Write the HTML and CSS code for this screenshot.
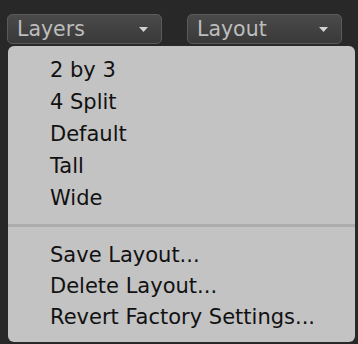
FILE: index.html
```html
<!DOCTYPE html>
<html lang="en">
  <head>
    <meta charset="UTF-8" />
    <meta name="viewport" content="width=device-width, initial-scale=1.0" />
    <title>Layout Menu</title>
    <link rel="stylesheet" href="styles.css">
  </head>
  <body>
    <div class="toolbar">
      <button class="drop">
        <span>Layers</span>
        <svg class="arrow" width="9" height="5" viewBox="0 0 9 5"><polygon points="0,0 9,0 4.5,5" /></svg>
      </button>
      <button class="drop">
        <span>Layout</span>
        <svg class="arrow" width="9" height="5" viewBox="0 0 9 5"><polygon points="0,0 9,0 4.5,5" /></svg>
      </button>
    </div>

    <div class="menu">
      <ul class="group">
        <li>2 by 3</li>
        <li>4 Split</li>
        <li>Default</li>
        <li>Tall</li>
        <li>Wide</li>
      </ul>
      <div class="sep"></div>
      <ul class="group actions">
        <li>Save Layout...</li>
        <li>Delete Layout...</li>
        <li>Revert Factory Settings...</li>
      </ul>
    </div>
  </body>
</html>
```

FILE: styles.css
```css
body {
  margin: 0;
  background-color: #282828;
  font-family: "DejaVu Sans", sans-serif;
}

.toolbar {
  display: flex;
  gap: 25px;
  padding: 14px 0 0 7px;
}

.drop {
  display: flex;
  align-items: center;
  justify-content: space-between;
  width: 155px;
  height: 30px;
  padding: 0 13px 0 9px;
  border: 1px solid #5a5a5a;
  border-radius: 5px;
  background: linear-gradient(#4a4a4a, #393939);
  color: #bdbdbd;
  font-family: "DejaVu Sans", sans-serif;
  font-size: 20.5px;
}

.arrow polygon {
  fill: #d2d2d2;
}

.menu {
  position: absolute;
  top: 46px;
  left: 8px;
  width: 347px;
  height: 296px;
  box-sizing: border-box;
  padding-top: 8px;
  background-color: #c3c3c3;
  border-radius: 6px;
  color: #111;
  font-size: 21px;
}

.group {
  list-style: none;
  margin: 0;
  padding: 0 0 0 42px;
  line-height: 32px;
}

.group.actions {
  line-height: 31px;
}

.sep {
  height: 3px;
  margin: 10px 0 13px;
  background-color: #acacac;
}
```
